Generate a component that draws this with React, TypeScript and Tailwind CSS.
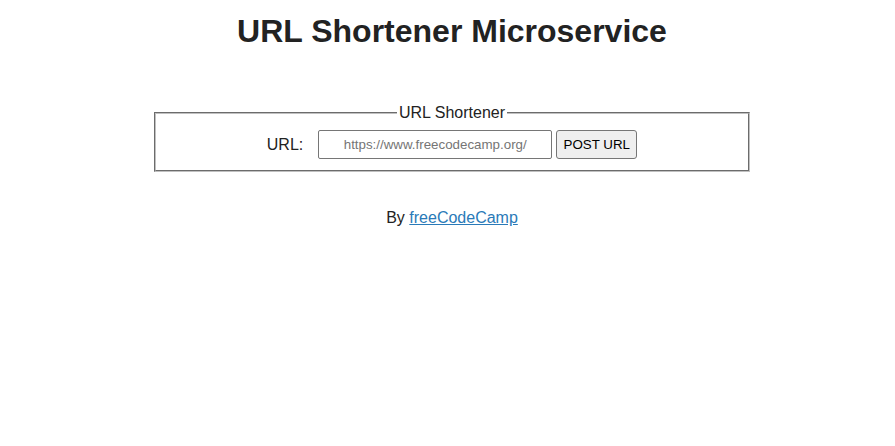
export default function App() {
  return (
    <div className="min-h-screen bg-white pl-[9px] text-[#222] [font-family:'Liberation_Sans',Arial,sans-serif]">
      <h1 className="mt-[13px] text-center text-[32px] font-bold leading-[36px]">
        URL Shortener Microservice
      </h1>

      <form
        className="mx-auto mt-[55px] w-[596px]"
        onSubmit={(e) => e.preventDefault()}
      >
        <fieldset className="border-2 border-[#c0c0c0] px-3 pb-[11px] pt-[8px] [border-style:groove]">
          <legend className="mx-auto px-0.5 text-base leading-[18px]">
            URL Shortener
          </legend>
          <div className="flex items-center justify-center">
            <label htmlFor="url_input" className="mr-[15px] text-base">
              URL:
            </label>
            <input
              id="url_input"
              type="text"
              placeholder="https://www.freecodecamp.org/"
              className="h-[29px] w-[234px] rounded-[2px] border border-[#767676] px-2 text-center text-[13.333px] placeholder:text-[#757575]"
            />
            <button
              type="submit"
              className="ml-[4px] h-[29px] w-[81px] rounded-[3px] border border-[#767676] bg-[#efefef] text-[13.333px] text-black"
            >
              POST URL
            </button>
          </div>
        </fieldset>
      </form>

      <p className="mt-[37px] text-center text-base leading-[18px]">
        By{" "}
        <a href="#" className="text-[#2a7ab8] underline">
          freeCodeCamp
        </a>
      </p>
    </div>
  );
}
